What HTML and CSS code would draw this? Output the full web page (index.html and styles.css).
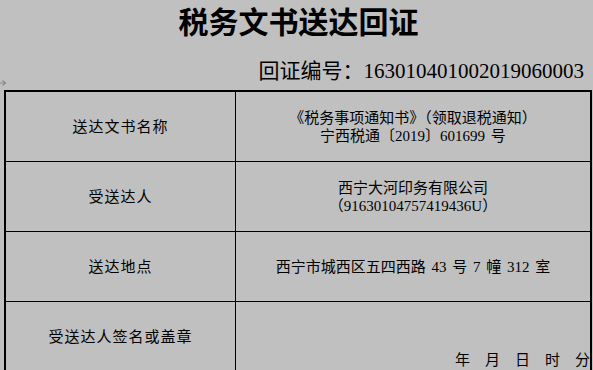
FILE: index.html
```html
<!DOCTYPE html>
<html lang="zh-CN">
<head>
<meta charset="utf-8">
<title>税务文书送达回证</title>
<link rel="stylesheet" href="styles.css">
</head>
<body>
<div class="page">
  <h1 class="title">税务文书送达回证</h1>
  <div class="number">回证编号：163010401002019060003</div>
  <svg class="mark" width="8" height="8" viewBox="0 0 8 8"><path d="M0 4 H6 M3.5 1.5 L6.5 4 L3.5 6.5" fill="none" stroke="#8a8a8a" stroke-width="1.2"/></svg>
  <div class="table">
    <div class="cell label">送达文书名称</div>
    <div class="cell value spaced">《税务事项通知书》（领取退税通知）<br>宁西税通〔2019〕601699 号</div>
    <div class="cell label">受送达人</div>
    <div class="cell value">西宁大河印务有限公司<br>（91630104757419436U）</div>
    <div class="cell label">送达地点</div>
    <div class="cell value spaced">西宁市城西区五四西路 43 号 7 幢 312 室</div>
    <div class="cell label last">受送达人签名或盖章</div>
    <div class="cell value last time">年　月　日　时　分</div>
  </div>
</div>
</body>
</html>
```
FILE: styles.css
```css
html, body {
  margin: 0;
  padding: 0;
  background: #c0c0c0;
}
body {
  width: 593px;
  height: 370px;
  overflow: hidden;
  font-family: "Liberation Serif", "Noto Sans CJK SC", serif;
  color: #000;
}
.page {
  position: relative;
}
.title {
  margin: 0;
  height: 40px;
  line-height: 40px;
  font-size: 30px;
  font-weight: 700;
  text-align: center;
  font-family: "Noto Sans CJK SC", sans-serif;
  padding-left: 4px;
}
.number {
  height: 50px;
  box-sizing: border-box;
  padding-top: 19px;
  line-height: 24px;
  font-size: 21px;
  text-align: right;
  padding-right: 9px;
}
.mark {
  position: absolute;
  left: -1px;
  top: 79px;
}
.table {
  margin-left: 4px;
  width: 588px;
  box-sizing: border-box;
  border: 2px solid #000;
  border-bottom: none;
  display: grid;
  grid-template-columns: 230px 1fr;
}
.cell {
  height: 70px;
  box-sizing: border-box;
  border-bottom: 1px solid #000;
  display: flex;
  align-items: center;
  justify-content: center;
  text-align: center;
  font-size: 15px;
  line-height: 18px;
}
.label {
  border-right: 1px solid #000;
  letter-spacing: 1px;
}
.spaced {
  word-spacing: 2px;
}
.cell.last {
  height: 69px;
  border-bottom: none;
}
.time {
  align-items: flex-end;
  justify-content: flex-end;
  padding-bottom: 2px;
  padding-right: 0;
}
```
